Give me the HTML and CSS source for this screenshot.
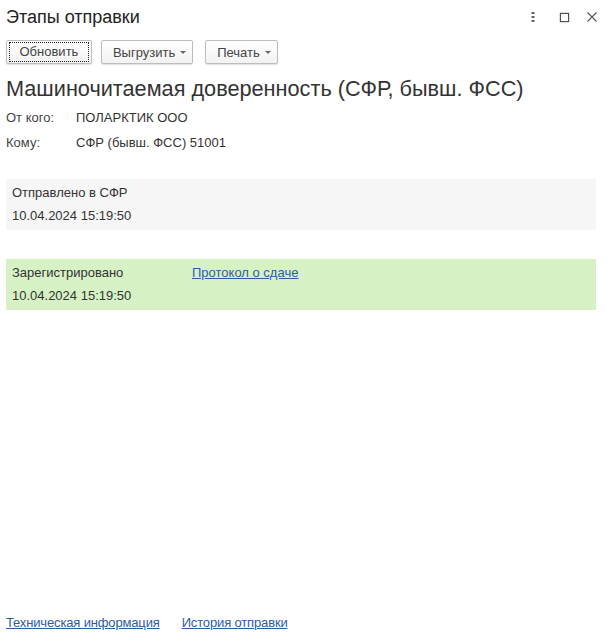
FILE: index.html
```html
<!DOCTYPE html>
<html lang="ru">
<head>
<meta charset="utf-8">
<link rel="stylesheet" href="styles.css">
</head>
<body>
<div class="page">
  <div class="titlebar">
    <div class="title">Этапы отправки</div>
    <div class="winctl">
      <svg class="ic ic-more" width="12" height="12" viewBox="0 0 12 12"><rect x="4.5" y="1" width="3" height="2" fill="#666"/><rect x="4.5" y="5" width="3" height="2" fill="#666"/><rect x="4.5" y="9" width="3" height="2" fill="#666"/></svg>
      <svg class="ic ic-max" width="12" height="12" viewBox="0 0 12 12"><rect x="1.5" y="1.5" width="9" height="9" fill="none" stroke="#444" stroke-width="1.2"/></svg>
      <svg class="ic" width="12" height="12" viewBox="0 0 12 12"><path d="M1.5 1.5 L10.5 10.5 M10.5 1.5 L1.5 10.5" stroke="#555" stroke-width="1.1"/></svg>
    </div>
  </div>
  <div class="toolbar">
    <button class="btn btn-focus"><span class="focus">Обновить</span></button>
    <button class="btn">Выгрузить <span class="caret"></span></button>
    <button class="btn btn-print">Печать <span class="caret"></span></button>
  </div>
  <h1 class="heading">Машиночитаемая доверенность (СФР, бывш. ФСС)</h1>
  <div class="fields">
    <div class="field"><span class="label">От кого:</span><span class="value">ПОЛАРКТИК ООО</span></div>
    <div class="field"><span class="label">Кому:</span><span class="value">СФР (бывш. ФСС) 51001</span></div>
  </div>
  <div class="stage stage-gray">
    <div class="stage-row"><span class="stage-name">Отправлено в СФР</span></div>
    <div class="stage-row">10.04.2024 15:19:50</div>
  </div>
  <div class="stage stage-green">
    <div class="stage-row"><span class="stage-name">Зарегистрировано</span><a class="link" href="#">Протокол о сдаче</a></div>
    <div class="stage-row">10.04.2024 15:19:50</div>
  </div>
  <div class="footer">
    <a class="link" href="#">Техническая информация</a>
    <a class="link" href="#">История отправки</a>
  </div>
</div>
</body>
</html>
```
FILE: styles.css
```css
html, body {
  margin: 0;
  padding: 0;
  background: #fff;
}
body {
  font-family: "Liberation Sans", Arial, sans-serif;
  font-size: 13px;
  color: #333;
}
.page {
  height: 642px;
  display: flex;
  flex-direction: column;
  padding: 0 13px 0 6px;
  box-sizing: border-box;
}
.titlebar {
  display: flex;
  align-items: center;
  justify-content: space-between;
  height: 34px;
}
.title {
  font-size: 18px;
  color: #222;
}
.winctl {
  display: flex;
  gap: 16px;
  align-items: center;
  margin-right: -2px;
}
.ic { display: block; }
.ic-more { margin-right: 4px; }
.ic-max { width: 11px; height: 11px; }
.toolbar {
  display: flex;
  gap: 9px;
  margin-top: 6px;
}
.btn {
  font-family: "Liberation Sans", Arial, sans-serif;
  font-size: 13px;
  color: #444;
  height: 24px;
  padding: 0 6px 0 11px;
  border: 1px solid #bdbdbd;
  border-radius: 2px;
  background: linear-gradient(#ffffff, #f2f2f2);
  box-shadow: 0 1px 1px rgba(0,0,0,0.12);
  display: flex;
  align-items: center;
  gap: 5px;
}
.btn-print { margin-left: 3px; }
.btn-focus { padding: 0 2px; }
.focus {
  border: 1px dotted #222;
  padding: 1px 9.5px 2px;
}
.caret {
  width: 0; height: 0;
  border-left: 3px solid transparent;
  border-right: 3px solid transparent;
  border-top: 3px solid #666;
}
.heading {
  font-weight: normal;
  font-size: 21.7px;
  color: #333;
  margin: 12px 0 0 0;
  line-height: 26px;
}
.fields { margin-top: 3px; }
.field {
  display: flex;
  height: 25px;
  align-items: center;
}
.label { width: 70px; color: #444; }
.value { color: #333; }
.stage {
  margin-top: 24px;
  padding: 2px 6px;
  height: 51px;
  box-sizing: border-box;
}
.stage + .stage { margin-top: 29px; }
.stage-gray { background: #f6f6f6; }
.stage-green { background: #d6f2c5; }
.stage-row {
  height: 24px;
  display: flex;
  align-items: center;
  color: #333;
}
.stage-row:first-child { height: 22px; }
.stage-name { width: 180px; }
.link {
  color: #2d5ba8;
  text-decoration: underline;
}
.footer {
  margin-top: auto;
  margin-bottom: 12px;
  display: flex;
  gap: 22px;
  letter-spacing: -0.15px;
}
```
